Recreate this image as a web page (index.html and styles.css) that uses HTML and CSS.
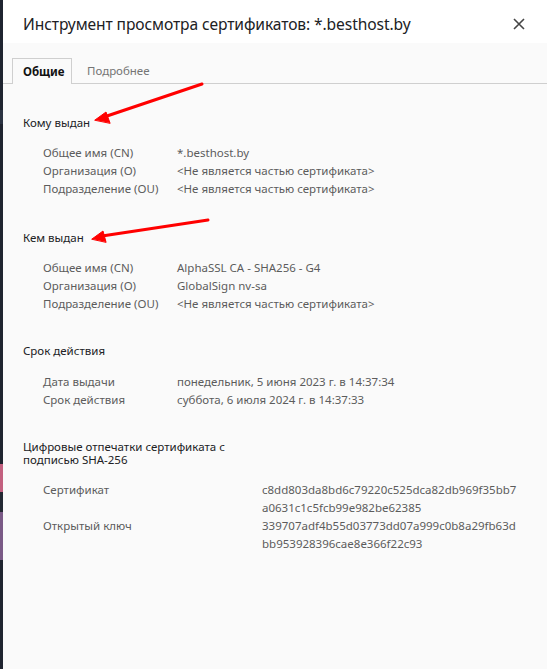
FILE: index.html
```html
<!DOCTYPE html>
<html lang="ru">
<head>
<meta charset="utf-8">
<title>Инструмент просмотра сертификатов</title>
<link rel="stylesheet" href="styles.css">
</head>
<body>
<div class="strip">
  <span class="s1"></span><span class="s2"></span><span class="s3"></span><span class="s4"></span>
</div>
<div class="dialog">
  <header class="header">
    <h1 class="title">Инструмент просмотра сертификатов: *.besthost.by</h1>
    <svg class="close" width="12" height="12" viewBox="0 0 12 12"><path d="M1 1 L11 11 M11 1 L1 11" stroke="#454545" stroke-width="1.6" fill="none"/></svg>
  </header>
  <nav class="tabs">
    <div class="tab active">Общие</div>
    <div class="tab">Подробнее</div>
  </nav>
  <main class="content">
    <section class="section">
      <h2 class="sec-title">Кому выдан</h2>
      <div class="rows">
        <div class="row"><span class="lbl">Общее имя (CN)</span><span class="val">*.besthost.by</span></div>
        <div class="row"><span class="lbl">Организация (O)</span><span class="val">&lt;Не является частью сертификата&gt;</span></div>
        <div class="row"><span class="lbl">Подразделение (OU)</span><span class="val">&lt;Не является частью сертификата&gt;</span></div>
      </div>
    </section>
    <section class="section s-issuer">
      <h2 class="sec-title">Кем выдан</h2>
      <div class="rows">
        <div class="row"><span class="lbl">Общее имя (CN)</span><span class="val">AlphaSSL CA - SHA256 - G4</span></div>
        <div class="row"><span class="lbl">Организация (O)</span><span class="val">GlobalSign nv-sa</span></div>
        <div class="row"><span class="lbl">Подразделение (OU)</span><span class="val">&lt;Не является частью сертификата&gt;</span></div>
      </div>
    </section>
    <section class="section s-validity">
      <h2 class="sec-title">Срок действия</h2>
      <div class="rows">
        <div class="row"><span class="lbl">Дата выдачи</span><span class="val">понедельник, 5 июня 2023 г. в 14:37:34</span></div>
        <div class="row"><span class="lbl">Срок действия</span><span class="val">суббота, 6 июля 2024 г. в 14:37:33</span></div>
      </div>
    </section>
    <section class="section">
      <h2 class="sec-title two">Цифровые отпечатки сертификата с<br>подписью SHA-256</h2>
      <div class="rows fp">
        <div class="row"><span class="lbl wide">Сертификат</span><span class="val"><span class="ln">c8dd803da8bd6c79220c525dca82db969f35bb7</span><span class="ln">a0631c1c5fcb99e982be62385</span></span></div>
        <div class="row"><span class="lbl wide">Открытый ключ</span><span class="val"><span class="ln">339707adf4b55d03773dd07a999c0b8a29fb63d</span><span class="ln">bb953928396cae8e366f22c93</span></span></div>
      </div>
    </section>
  </main>
</div>
<svg class="arrows" width="547" height="669" viewBox="0 0 547 669">
  <g fill="#ff0000" stroke="#ff0000" stroke-linecap="round">
    <line x1="202" y1="84" x2="104" y2="117" stroke-width="3"/>
    <polygon points="95,120 106,112 110,123" stroke-width="1" stroke-linejoin="round"/>
    <line x1="208" y1="220" x2="102" y2="236" stroke-width="3"/>
    <polygon points="92,239 103,231 106,242" stroke-width="1" stroke-linejoin="round"/>
  </g>
</svg>
</body>
</html>
```

FILE: styles.css
```css
html, body {
  margin: 0;
  padding: 0;
  height: 100%;
}
body {
  display: flex;
  font-family: "Noto Sans", "Open Sans", sans-serif;
  background: #fafafa;
  overflow: hidden;
}
.strip {
  width: 3px;
  background: #1f2430;
  display: flex;
  flex-direction: column;
}
.strip .s1 { height: 14px; margin-top: 110px; background: #2b3342; }
.strip .s2 { height: 28px; margin-top: 340px; background: #c2607f; }
.strip .s3 { height: 20px; background: #232833; }
.strip .s4 { height: 48px; background: #7a5a86; }
.dialog {
  flex: 1;
  display: flex;
  flex-direction: column;
  background: #fafafa;
}
.header {
  height: 43px;
  background: #ffffff;
  display: flex;
  align-items: center;
  justify-content: space-between;
  padding: 0 22px 0 20px;
}
.title {
  margin: 4px 0 0;
  font-size: 15.6px;
  font-weight: 400;
  color: #202124;
  letter-spacing: -0.1px;
}
.close {
  margin-top: 5px;
}
.tabs {
  display: flex;
  padding: 15px 0 0 9px;
  border-bottom: 1px solid #cfcfcf;
}
.tab {
  font-size: 11.5px;
  height: 25px;
  line-height: 25px;
  padding: 0 8px 0 15px;
  color: #757575;
}
.tab.active {
  color: #111;
  font-weight: 700;
  padding: 0 8px 0 10px;
  border: 1px solid #cfcfcf;
  border-bottom: none;
  background: #fafafa;
  margin-bottom: -1px;
  height: 25px;
  width: 40px;
}
.content {
  padding: 30px 0 0 20px;
}
.section {
  margin-bottom: 31px;
}
.section.s-issuer {
  margin-bottom: 29px;
}
.section.s-validity {
  margin-bottom: 31px;
}
.sec-title {
  margin: 0 0 12px;
  font-size: 11.5px;
  font-weight: 400;
  line-height: 18px;
  color: #202124;
}
.s-validity .sec-title {
  margin-bottom: 13px;
}
.sec-title.two {
  line-height: 13px;
  margin-bottom: 15px;
}
.rows {
  padding-left: 20px;
}
.row {
  display: flex;
  font-size: 11.5px;
  line-height: 18px;
  color: #5c5c5c;
}
.lbl {
  width: 134px;
  flex: none;
}
.lbl.wide {
  width: 219px;
}
.val {
  display: flex;
  flex-direction: column;
}
.ln {
  display: block;
}
.arrows {
  position: absolute;
  left: 0;
  top: 0;
  pointer-events: none;
}
```
